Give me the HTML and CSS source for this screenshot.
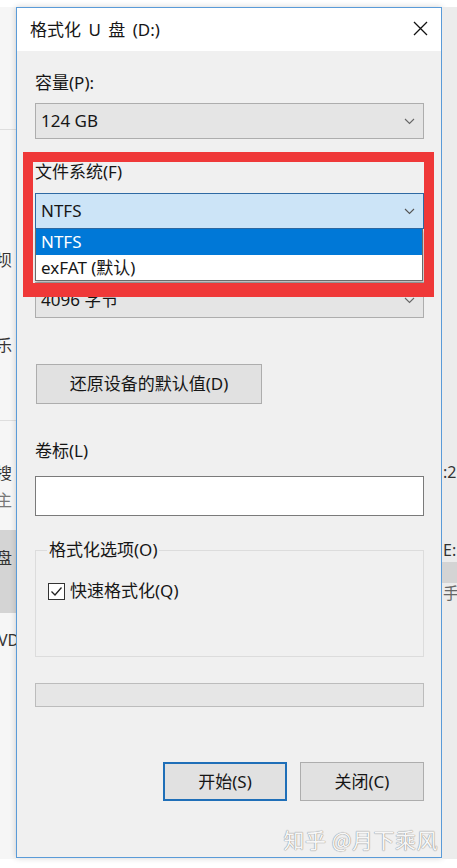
FILE: index.html
```html
<!DOCTYPE html>
<html lang="zh-CN">
<head>
<meta charset="utf-8">
<title>格式化 U 盘 (D:)</title>
<link rel="stylesheet" href="styles.css">
</head>
<body>
<div class="screen">
  <div class="strip strip-left">
    <div class="hl hl1"></div>
    <div class="frag f-ba">坝</div>
    <div class="frag f-le">乐</div>
    <div class="hl hl2"></div>
    <div class="frag f-sou">搜</div>
    <div class="frag f-zhu">主</div>
    <div class="gblock"><span class="frag">盘</span></div>
    <div class="frag f-vd">VD</div>
  </div>

  <div class="dialog">
    <div class="titlebar">
      <span class="title">格式化 U 盘 (D:)</span>
      <svg class="close" width="15" height="15" viewBox="0 0 15 15"><path d="M1 1 L14 14 M14 1 L1 14" stroke="#111" stroke-width="1.3" fill="none"/></svg>
    </div>
    <div class="body">
      <div class="label l-cap">容量(P):</div>
      <div class="combo c1"><span>124 GB</span><svg class="chev" width="11" height="7" viewBox="0 0 11 7"><polyline points="1,1 5.5,5.5 10,1" stroke="#666" stroke-width="1.1" fill="none"/></svg></div>

      <div class="label l-fs">文件系统(F)</div>
      <div class="combo combo-focus c2"><span>NTFS</span><svg class="chev" width="11" height="7" viewBox="0 0 11 7"><polyline points="1,1 5.5,5.5 10,1" stroke="#555" stroke-width="1.1" fill="none"/></svg></div>

      <div class="label-space"></div>
      <div class="combo c3"><span>4096 字节</span><svg class="chev" width="11" height="7" viewBox="0 0 11 7"><polyline points="1,1 5.5,5.5 10,1" stroke="#666" stroke-width="1.1" fill="none"/></svg></div>

      <div class="btn btn-restore">还原设备的默认值(D)</div>

      <div class="label l-vol">卷标(L)</div>
      <div class="input"></div>

      <fieldset class="group">
        <legend>格式化选项(O)</legend>
        <div class="check-row">
          <span class="checkbox"><svg width="15" height="15" viewBox="0 0 15 15"><polyline points="2.5,7.5 6,11 12.5,3.5" stroke="#222" stroke-width="1.3" fill="none"/></svg></span>
          <span>快速格式化(Q)</span>
        </div>
      </fieldset>

      <div class="progress"></div>

      <div class="actions">
        <div class="btn btn-action btn-default">开始(S)</div>
        <div class="btn btn-action">关闭(C)</div>
      </div>

      <div class="watermark">知乎 @月下乘风</div>

      <div class="list">
        <div class="item item-sel">NTFS</div>
        <div class="item">exFAT (默认)</div>
      </div>
      <div class="highlight"></div>
    </div>
  </div>

  <div class="strip strip-right">
    <div class="frag f-r2">:2</div>
    <div class="frag f-re">E:</div>
    <div class="rband"></div>
    <div class="frag f-rs">手</div>
  </div>
</div>
</body>
</html>
```
FILE: styles.css
```css
* { box-sizing: border-box; }

html, body {
  margin: 0;
  padding: 0;
  background: #ffffff;
}

body {
  font-family: "Noto Sans", "Noto Sans CJK SC", sans-serif;
  font-size: 17px;
  color: #161616;
}

.screen {
  width: 457px;
  height: 868px;
  display: flex;
  overflow: hidden;
  background: #ffffff;
}

/* background window fragments */
.strip {
  display: flex;
  flex-direction: column;
  overflow: hidden;
  flex: none;
}

.strip-left {
  width: 16px;
  background: #f6f6f6;
  margin-top: 7px;
  height: 852px;
}

.strip-right {
  width: 15px;
  background: #ececec;
  margin-top: 7px;
  height: 852px;
}

.frag {
  line-height: 20px;
  height: 20px;
  font-size: 16px;
  color: #333;
  white-space: nowrap;
}

.strip-left .frag { margin-left: -4px; }
.strip-right .frag { margin-left: 1px; }

.hl { height: 1px; background: #dedede; flex: none; }
.hl1 { margin-top: 122px; }
.f-ba { margin-top: 120px; }
.f-le { margin-top: 65px; }
.hl2 { margin-top: 65px; }
.f-sou { margin-top: 42px; }
.f-zhu { margin-top: 7px; color: #777; }
.gblock {
  margin-top: 20px;
  height: 83px;
  background: #d4d4d4;
  padding-top: 18px;
  flex: none;
}
.gblock .frag { display: block; margin-left: -4px; }
.f-vd { margin-top: 17px; margin-left: -2px !important; }

.f-r2 { margin-top: 455px; }
.f-re { margin-top: 58px; }
.rband { margin-top: 2px; height: 21px; background: #d4d4d4; flex: none; }
.f-rs { margin-top: 0; color: #666; }

/* dialog */
.dialog {
  width: 426px;
  flex: none;
  margin-top: 7px;
  height: 851px;
  border: 1px solid #5a9bd8;
  background: #f0f0f0;
  box-shadow: 0 0 6px rgba(0, 0, 0, 0.18);
  display: flex;
  flex-direction: column;
}

.titlebar {
  height: 43px;
  background: #ffffff;
  display: flex;
  align-items: center;
  justify-content: space-between;
  padding: 0 13px 0 13px;
  flex: none;
}

.title {
  font-size: 17px;
  line-height: 20px;
  word-spacing: 3px;
  color: #161616;
}

.close { display: block; margin-top: -2px; }

.body {
  position: relative;
  flex: 1;
  padding: 0 17px 0 18px;
  display: flex;
  flex-direction: column;
}

.label {
  line-height: 20px;
  height: 20px;
  white-space: nowrap;
}

.label-space {
  height: 20px;
  margin-top: 23px;
}

.l-cap { margin-top: 22px; }
.l-fs { margin-top: 23px; }
.l-vol { margin-top: 37px; }

.combo {
  height: 36px;
  border: 1px solid #adadad;
  background: #e5e5e5;
  display: flex;
  align-items: center;
  justify-content: space-between;
  padding: 0 8px 0 5px;
  line-height: 20px;
}

.c1 { margin-top: 10px; }
.c2 { margin-top: 11px; }
.c3 { margin-top: 10px; }

.combo-focus {
  background: #cce4f7;
  border-color: #2f6aa3;
}

.chev { display: block; }

.btn {
  background: #e1e1e1;
  border: 1px solid #adadad;
  display: flex;
  align-items: center;
  justify-content: center;
  line-height: 20px;
  white-space: nowrap;
}

.btn-restore {
  margin-top: 46px;
  margin-left: 1px;
  width: 226px;
  height: 40px;
}

.input {
  margin-top: 15px;
  height: 40px;
  background: #ffffff;
  border: 1px solid #7a7a7a;
}

.group {
  margin: 24px 0 0 0;
  padding: 0 11px 56px 11px;
  border: 1px solid #dcdcdc;
  min-width: 0;
}

.group legend {
  padding: 0 2px;
  line-height: 20px;
  height: 20px;
}

.check-row {
  margin-top: 22px;
  display: flex;
  align-items: center;
  gap: 5px;
  height: 18px;
  line-height: 20px;
  padding-left: 1px;
}

.checkbox {
  width: 17px;
  height: 17px;
  border: 1px solid #333;
  background: #ffffff;
  display: flex;
  align-items: center;
  justify-content: center;
  flex: none;
}

.checkbox svg { display: block; }

.progress {
  margin-top: 26px;
  height: 24px;
  background: #e6e6e6;
  border: 1px solid #bcbcbc;
}

.actions {
  margin-top: 55px;
  display: flex;
  justify-content: flex-end;
  gap: 13px;
}

.btn-action {
  width: 124px;
  height: 39px;
}

.btn-default {
  border: 2px solid #1f6fb8;
}

.watermark {
  margin-top: 25px;
  align-self: flex-end;
  margin-right: -14px;
  font-family: "Noto Sans CJK SC", sans-serif;
  font-size: 21px;
  line-height: 26px;
  letter-spacing: 0.5px;
  color: #f7f7f7;
  text-shadow: 0 0 1px #8a8a8a, 0 0 1px #8a8a8a;
  white-space: nowrap;
}

/* open dropdown list (overlay) */
.list {
  position: absolute;
  left: 18px;
  top: 178px;
  width: 388px;
  border: 1px solid #6b6b6b;
  border-top: none;
  background: #ffffff;
  box-shadow: 1px 2px 3px rgba(0, 0, 0, 0.25);
}

.item {
  height: 25px;
  line-height: 25px;
  padding-left: 5px;
  white-space: nowrap;
}

.item-sel {
  background: #0078d7;
  color: #ffffff;
  height: 26px;
  line-height: 26px;
}

/* red annotation box (overlay) */
.highlight {
  position: absolute;
  left: 6px;
  top: 101px;
  width: 411px;
  height: 145px;
  border: 10px solid #ef3838;
  border-bottom-width: 14px;
}
```
